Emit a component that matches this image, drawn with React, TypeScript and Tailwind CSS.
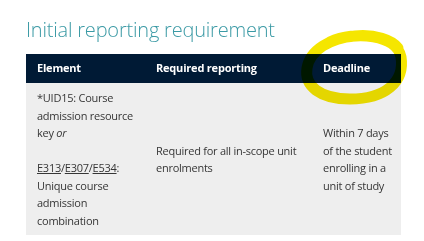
export default function App() {
  return (
    <div
      className="relative w-[424px] h-[241px] bg-white overflow-hidden"
      style={{ fontFamily: '"Open Sans", "Liberation Sans", sans-serif' }}
    >
      <div className="pl-[26px] pt-[16px]">
        {/* 제목 */}
        <h2 className="text-[20px] leading-[28px] font-light text-[#3b9aa5] tracking-[-0.2px]">
          Initial reporting requirement
        </h2>

        {/* 표 */}
        <div className="mt-[10px] w-[375px]">
          <div className="grid grid-cols-[119px_167px_89px] h-[29px] items-center bg-[#001a35] text-white text-[11px] font-bold tracking-[-0.2px]">
            <div className="px-[11px]">Element</div>
            <div className="px-[11px]">Required reporting</div>
            <div className="px-[11px]">Deadline</div>
          </div>
          <div className="grid grid-cols-[119px_167px_89px] h-[152px] items-center bg-[#eeeeee] text-[#363636] text-[11px] leading-[17.5px] tracking-[-0.25px]">
            <div className="pl-[11px] pr-[8px]">
              <p>
                *UID15: Course admission resource key <em>or</em>
              </p>
              <p className="mt-[17.5px]">
                <span className="underline">E313</span>/<span className="underline">E307</span>/
                <span className="underline">E534</span>: Unique course admission combination
              </p>
            </div>
            <div className="px-[11px]">Required for all in-scope unit enrolments</div>
            <div className="pl-[11px] pr-[6px]">Within 7 days of the student enrolling in a unit of study</div>
          </div>
        </div>
      </div>

      {/* 형광펜 표시 */}
      <svg className="absolute left-0 top-0 mix-blend-multiply pointer-events-none" width="424" height="241">
        <path
          d="M 330 42 C 355 30, 397 35, 401 57 C 405 82, 385 99, 350 99 C 320 99, 304 86, 307 68 C 310 50, 330 38, 355 36 C 375 34, 392 40, 398 48"
          fill="none"
          stroke="#f5e600"
          strokeWidth="11"
          strokeLinecap="round"
        />
      </svg>
    </div>
  );
}
